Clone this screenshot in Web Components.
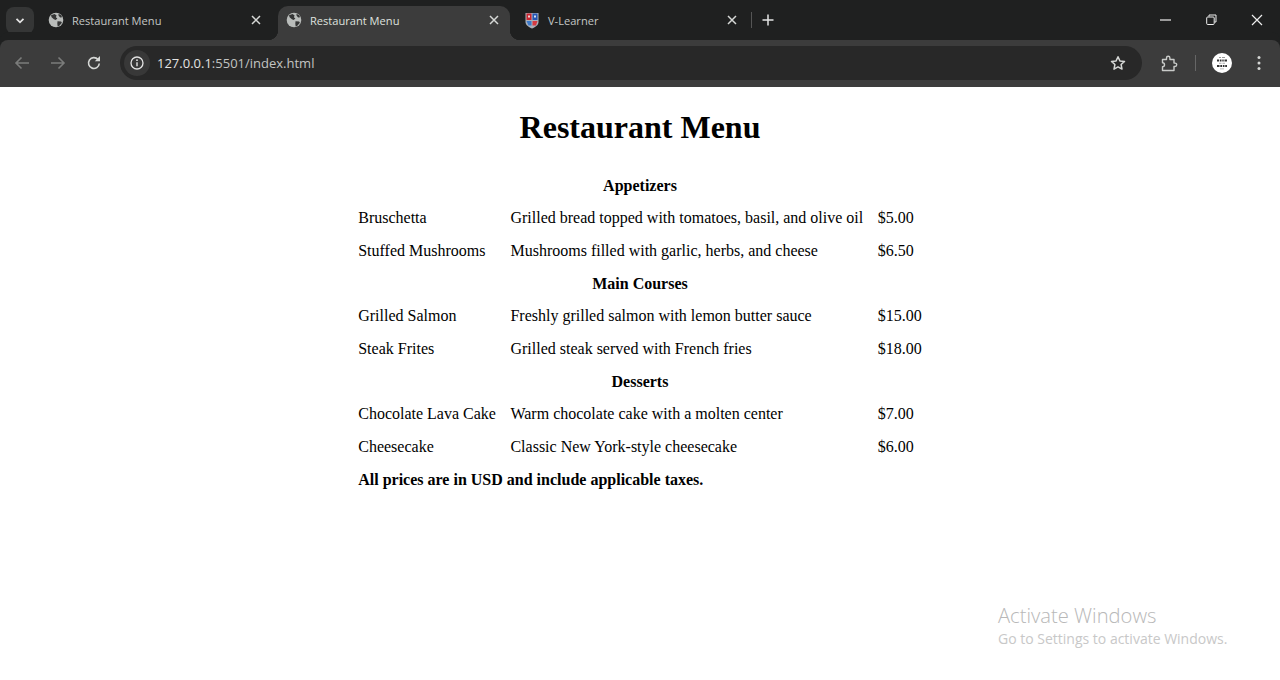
<!DOCTYPE html>
<html lang="en">
<head>
<meta charset="utf-8">
<title>Restaurant Menu</title>
<style>
html, body { margin: 0; height: 100%; background: #fff; overflow: hidden; }
body { display: flex; flex-direction: column; height: 680px; }
</style>
</head>
<body>
<browser-strip>
  <browser-tab icon="globe">Restaurant Menu</browser-tab>
  <browser-tab icon="globe" active>Restaurant Menu</browser-tab>
  <browser-tab icon="shield">V-Learner</browser-tab>
</browser-strip>
<browser-toolbar></browser-toolbar>
<menu-page>
  <menu-table></menu-table>
</menu-page>
<activate-note></activate-note>

<script>
const GLOBE = `<svg width="16" height="16" viewBox="0 0 16 16"><circle cx="8" cy="8" r="7.3" fill="#b9bcba"/><path d="M3 3.2 6.6 2l2 1.4-.7 1.8 1.5 1.3-1.7 1.4-1.8-.6L3.6 5.2zM9.5 9.3l3.6.2.8 1.2-2.8 3.4-1.4.3-.4-2.6zM10.5 1.7l2.7 1.6.9 2-2 .2-1.6-2z" fill="#343535"/></svg>`
const SHIELD = `<svg width="16" height="17" viewBox="0 0 16 17"><path d="M1.500 1h13v9c0 3-2.800 5-6.500 6.500C4.300 15 1.500 13 1.500 10z" fill="#aab0ba"/><rect x="2.500" y="1.500" width="5" height="6.500" fill="#c8242f"/><rect x="8.500" y="1.500" width="5" height="6.500" fill="#2456b5"/><path d="M2.500 9h5v4.500H4.500z" fill="#3a78c8"/><path d="M8.500 9h5l-1.500 4.500H8.500z" fill="#d63a42"/><rect x="4" y="3.500" width="2" height="2" fill="#f2d7d7"/><rect x="10" y="3.500" width="2" height="2" fill="#d7e2f5"/></svg>`
const CLOSE = `<svg width="10" height="10" viewBox="0 0 10 10"><path d="M1 1l8 8M9 1l-8 8" stroke="currentColor" stroke-width="1.500" fill="none"/></svg>`

const tabTemplate = document.createElement('template')
tabTemplate.innerHTML = `
<style>
:host {
  display: flex;
  align-items: center;
  position: relative;
  box-sizing: border-box;
  width: 232px;
  height: 34px;
  padding: 0 11px 6px 8px;
  border-radius: 10px 10px 0 0;
  color: #c4c7c5;
  font: 11.1px "Open Sans", sans-serif;
}
:host([active]) {
  background: #3c3c3c;
  color: #dfe1df;
}
:host([active])::before, :host([active])::after {
  content: "";
  position: absolute;
  bottom: 0;
  width: 10px;
  height: 10px;
}
:host([active])::before {
  left: -10px;
  background: radial-gradient(circle at 0 0, transparent 10px, #3c3c3c 10.5px);
}
:host([active])::after {
  right: -10px;
  background: radial-gradient(circle at 100% 0, transparent 10px, #3c3c3c 10.5px);
}
#icon { display: flex; width: 16px; margin-right: 8px; }
#label { flex: 1; white-space: nowrap; }
#close { display: flex; color: #d6d8d6; }
</style>
<span id="icon"></span>
<span id="label"><slot></slot></span>
<span id="close">${CLOSE}</span>
`

customElements.define('browser-tab',
  class extends HTMLElement {
    constructor () {
      super()
      this.attachShadow({ mode: 'open' })
        .appendChild(tabTemplate.content.cloneNode(true))
    }

    connectedCallback () {
      this.shadowRoot.querySelector('#icon').innerHTML = this.getAttribute('icon') === 'shield' ? SHIELD : GLOBE
    }
  }
)

const stripTemplate = document.createElement('template')
stripTemplate.innerHTML = `
<style>
:host {
  display: flex;
  align-items: flex-end;
  flex: none;
  height: 40px;
  padding-left: 6px;
  background: #1f2020;
}
#toggle {
  display: flex;
  align-items: center;
  justify-content: center;
  align-self: flex-start;
  width: 28px;
  height: 27px;
  margin: 7px 6px 0 0;
  border-radius: 8px;
  background: #353636;
}
#tabs {
  display: flex;
  align-items: flex-end;
  gap: 6px;
}
#sep {
  align-self: flex-start;
  width: 1px;
  height: 16px;
  margin: 12px 0 0 3px;
  background: #555;
}
#plus { display: flex; align-self: flex-start; margin: 14px 0 0 10px; }
#controls {
  display: flex;
  align-self: stretch;
  align-items: center;
  margin-left: auto;
}
#controls span {
  display: flex;
  justify-content: center;
  width: 46px;
  margin-bottom: 1px;
}
</style>
<div id="toggle"><svg width="10" height="8" viewBox="0 0 10 8"><path d="M1.500 1.800 5 5.300l3.500-3.500" stroke="#e3e3e3" stroke-width="1.800" fill="none"/></svg></div>
<div id="tabs"><slot></slot></div>
<div id="sep"></div>
<div id="plus"><svg width="12" height="12" viewBox="0 0 12 12"><path d="M6 .5v11M.5 6h11" stroke="#e3e3e3" stroke-width="1.500"/></svg></div>
<div id="controls">
  <span><svg width="11" height="2" viewBox="0 0 11 2"><path d="M0 1h11" stroke="#eee" stroke-width="1.200"/></svg></span>
  <span><svg width="11" height="11" viewBox="0 0 11 11"><path d="M3 2.500V1h7v7H8.500" stroke="#eee" fill="none"/><rect x=".7" y="3" width="7.500" height="7.500" rx="1" stroke="#eee" fill="none"/></svg></span>
  <span><svg width="12" height="12" viewBox="0 0 12 12"><path d="M1 1l10 10M11 1 1 11" stroke="#eee" stroke-width="1.200"/></svg></span>
</div>
`

customElements.define('browser-strip',
  class extends HTMLElement {
    constructor () {
      super()
      this.attachShadow({ mode: 'open' })
        .appendChild(stripTemplate.content.cloneNode(true))
    }
  }
)

const toolbarTemplate = document.createElement('template')
toolbarTemplate.innerHTML = `
<style>
:host {
  display: flex;
  align-items: center;
  flex: none;
  box-sizing: border-box;
  height: 47px;
  padding: 0 3px 1px 4px;
  background: #3c3c3c;
  border-radius: 8px 8px 0 0;
  box-shadow: 0 -8px 0 0 #1f2020;
}
.btn {
  display: flex;
  align-items: center;
  justify-content: center;
  flex: none;
  width: 36px;
  height: 36px;
}
#address {
  display: flex;
  align-items: center;
  flex: 1;
  height: 34px;
  margin: 0 9px 0 8px;
  padding: 0 16px 0 4px;
  border-radius: 17px;
  background: #282828;
  color: #e3e3e3;
  font: 13px "Open Sans", sans-serif;
}
#info {
  display: flex;
  align-items: center;
  justify-content: center;
  width: 26px;
  height: 26px;
  margin-right: 7px;
  border-radius: 50%;
  background: #383838;
}
#url { flex: 1; white-space: nowrap; }
#url span { color: #c2c4c2; }
#sep { width: 1px; height: 16px; margin: 0 8px 0 8px; background: #666; }
#avatar { width: 20px; height: 20px; }
#account { margin-right: 1px; }
</style>
<div class="btn"><svg width="16" height="14" viewBox="0 0 16 14"><path d="M15 7H2M7.500 1.500 2 7l5.500 5.500" stroke="#7b7c7b" stroke-width="1.600" fill="none"/></svg></div>
<div class="btn"><svg width="16" height="14" viewBox="0 0 16 14"><path d="M1 7h13M8.500 1.500 14 7l-5.500 5.500" stroke="#7b7c7b" stroke-width="1.600" fill="none"/></svg></div>
<div class="btn"><svg width="16" height="16" viewBox="0 0 16 16"><path d="M13.300 8.500A5.400 5.400 0 1 1 12 4.500" stroke="#d5d7d5" stroke-width="1.600" fill="none"/><path d="M14 1v5.200H8.800z" fill="#d5d7d5"/></svg></div>
<div id="address">
  <div id="info"><svg width="14" height="14" viewBox="0 0 14 14"><circle cx="7" cy="7" r="6" stroke="#e3e3e3" stroke-width="1.300" fill="none"/><path d="M7 6.200v4" stroke="#e3e3e3" stroke-width="1.400"/><circle cx="7" cy="4.200" r=".9" fill="#e3e3e3"/></svg></div>
  <div id="url">127.0.0.1<span>:5501/index.html</span></div>
  <svg width="16" height="16" viewBox="0 0 16 16"><path d="M8 1.700l1.900 4.200 4.600.5-3.400 3.100.9 4.600L8 11.800l-4 2.300.9-4.600L1.500 6.400l4.600-.5z" stroke="#d5d7d5" stroke-width="1.500" fill="none" stroke-linejoin="round"/></svg>
</div>
<div class="btn"><svg width="17" height="17" viewBox="0 0 17 17"><path d="M1.500 4.500H5.500V3a1.700 1.700 0 0 1 3.400 0v1.500h4.100v3.600h1a1.700 1.700 0 0 1 0 3.400h-1v4H1.500v-3.700a2 2 0 0 0 0-4z" stroke="#c9cbc9" stroke-width="1.400" fill="none" stroke-linejoin="round"/></svg></div>
<div id="sep"></div>
<div class="btn" id="account"><svg id="avatar" viewBox="0 0 20 20"><circle cx="10" cy="10" r="10" fill="#fff"/><path d="M7 4h2v1H7zM10 4h3v1h-3z" fill="#999"/><path d="M5 6.500h2.200v2H5zM8 6.500h1.500v2H8zM10.300 6.500h1.400v2h-1.400zM12.500 6.500H15v2h-2.500z" fill="#333"/><path d="M7 9.800h2.500v1H7zM10.500 9.800H13v1h-2.500z" fill="#aaa"/><path d="M5 12h2.500v2H5zM8.300 12H10v2H8.300zM10.800 12h1.700v2h-1.700zM13.200 12H15v2h-1.800z" fill="#333"/><path d="M8 15.500h4v.8H8z" fill="#aaa"/></svg></div>
<div class="btn"><svg width="4" height="16" viewBox="0 0 4 16"><circle cx="2" cy="2.500" r="1.500" fill="#d5d7d5"/><circle cx="2" cy="8" r="1.500" fill="#d5d7d5"/><circle cx="2" cy="13.500" r="1.500" fill="#d5d7d5"/></svg></div>
`

customElements.define('browser-toolbar',
  class extends HTMLElement {
    constructor () {
      super()
      this.attachShadow({ mode: 'open' })
        .appendChild(toolbarTemplate.content.cloneNode(true))
    }
  }
)

const pageTemplate = document.createElement('template')
pageTemplate.innerHTML = `
<style>
:host {
  display: block;
  flex: 1;
  padding: 8px;
  background: #fff;
  color: #000;
  font: 16px "Liberation Serif", serif;
}
h1 {
  margin: 14px 0 22.67px;
  font-size: 32px;
  line-height: 37px;
  text-align: center;
}
</style>
<h1>Restaurant Menu</h1>
<slot></slot>
`

customElements.define('menu-page',
  class extends HTMLElement {
    constructor () {
      super()
      this.attachShadow({ mode: 'open' })
        .appendChild(pageTemplate.content.cloneNode(true))
    }
  }
)

const menuData = [
  { section: 'Appetizers' },
  ['Bruschetta', 'Grilled bread topped with tomatoes, basil, and olive oil', '$5.00'],
  ['Stuffed Mushrooms', 'Mushrooms filled with garlic, herbs, and cheese', '$6.50'],
  { section: 'Main Courses' },
  ['Grilled Salmon', 'Freshly grilled salmon with lemon butter sauce', '$15.00'],
  ['Steak Frites', 'Grilled steak served with French fries', '$18.00'],
  { section: 'Desserts' },
  ['Chocolate Lava Cake', 'Warm chocolate cake with a molten center', '$7.00'],
  ['Cheesecake', 'Classic New York-style cheesecake', '$6.00']
]

customElements.define('menu-table',
  class extends HTMLElement {
    constructor () {
      super()
      const rows = menuData.map(row => row.section
        ? `<tr><th colspan="3">${row.section}</th></tr>`
        : `<tr>${row.map(cell => `<td>${cell}</td>`).join('')}</tr>`
      ).join('')
      this.attachShadow({ mode: 'open' }).innerHTML = `
<style>
:host { display: block; }
table { margin: 0 auto; border-spacing: 2px; }
th, td { padding: 6px 6.25px; line-height: 18.67px; text-align: left; }
th { text-align: center; }
tfoot td { font-weight: bold; }
</style>
<table>
  <tbody>${rows}</tbody>
  <tfoot><tr><td colspan="3">All prices are in USD and include applicable taxes.</td></tr></tfoot>
</table>
`
    }
  }
)

customElements.define('activate-note',
  class extends HTMLElement {
    constructor () {
      super()
      this.attachShadow({ mode: 'open' }).innerHTML = `
<style>
:host {
  display: block;
  position: absolute;
  left: 998px;
  top: 603px;
  color: #b8b8b8;
  font-family: "Open Sans", sans-serif;
  white-space: nowrap;
}
div { font-size: 20.2px; font-weight: 300; line-height: 25px; }
p { margin: 1px 0 0; font-size: 14px; line-height: 20px; color: #c8c8c8; }
</style>
<div>Activate Windows</div>
<p>Go to Settings to activate Windows.</p>
`
    }
  }
)
</script>
</body>
</html>
